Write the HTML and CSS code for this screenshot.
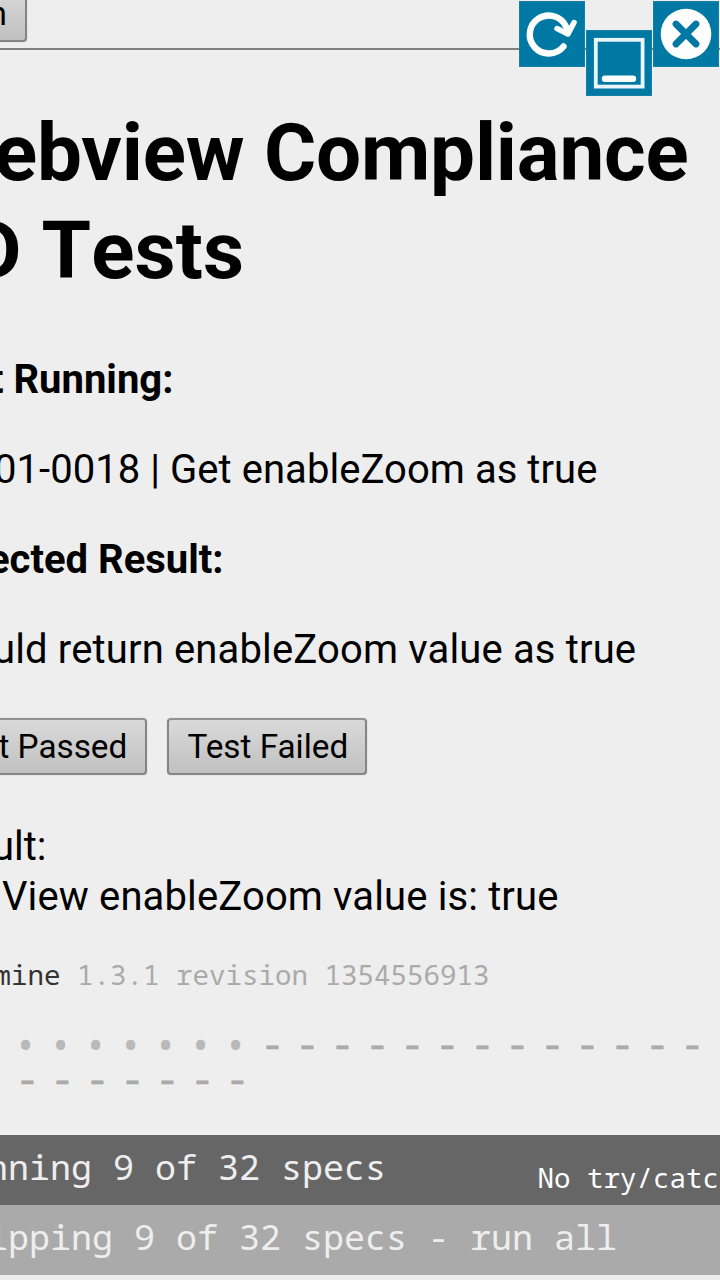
FILE: index.html
```html
<!DOCTYPE html>
<html lang="en">
<head>
<meta charset="utf-8">
<title>Webview Compliance</title>
<link rel="stylesheet" href="styles.css">
</head>
<body>
<header class="top"><button class="btn btn-top">n</button></header>
<nav class="controls">
  <svg class="control reload" viewBox="0 0 66 66"><path d="M44.500 45.500A19 19 0 1 1 47 25.500" class="stroke"/><path d="M38 27.500L49 33L55 21.500" class="arrow"/><path d="M43 24L51 26L48 34Z" fill="#fff"/></svg>
  <svg class="control minimize" viewBox="0 0 66 66"><rect x="9.800" y="9.800" width="46.800" height="46.800" class="frame"/><path d="M19 48.700H47" class="stroke"/></svg>
  <svg class="control close" viewBox="0 0 66 66"><circle cx="33" cy="33" r="25.300" fill="#fff"/><path d="M23 23L43 43M43 23L23 43" class="cross"/></svg>
</nav>
<main>
  <h1 class="title"><span class="title-a">ebview Compliance</span><span class="title-b">D Tests</span></h1>
  <p class="line bold l1">t Running:</p>
  <p class="line l2">01-0018 | Get enableZoom as true</p>
  <p class="line bold l3">ected Result:</p>
  <p class="line l4">uld return enableZoom value as true</p>
  <div class="actions"><button class="btn passed">t Passed</button><button class="btn failed">Test Failed</button></div>
  <div class="result"><p class="line l5">ult:</p><p class="line l6">View enableZoom value is: true</p></div>
</main>
<section class="reporter">
  <div class="version"><span class="name">mine</span> 1.3.1 revision 1354556913</div>
  <div class="symbols">
    <span class="dot">•</span><span class="dot">•</span><span class="dot">•</span><span class="dot">•</span><span class="dot">•</span><span class="dot">•</span><span class="dot">•</span><span>-</span><span>-</span><span>-</span><span>-</span><span>-</span><span>-</span><span>-</span><span>-</span><span>-</span><span>-</span><span>-</span><span>-</span><span>-</span>
    <span>-</span><span>-</span><span>-</span><span>-</span><span>-</span><span>-</span><span>-</span>
  </div>
  <div class="bar running"><span>nning 9 of 32 specs</span><span class="catch">No try/catc</span></div>
  <div class="bar skipping"><span>ipping 9 of 32 specs - run all</span></div>
</section>
</body>
</html>
```
FILE: styles.css
```css
* { box-sizing: border-box; }
html, body { margin: 0; height: 1280px; overflow: hidden; }
body { background: #eee; color: #000; font-family: Roboto, sans-serif; white-space: nowrap; }
p, h1 { margin: 0; }
.top { height: 50px; border-bottom: 2px solid #808080; display: flex; align-items: flex-end; padding-bottom: 6px; }
.btn { height: 57px; border: 2px solid #858585; border-top-color: #929292; border-radius: 4px; background: linear-gradient(#dadada, #c0c0c0); color: #000; font: 33.3px/53px Roboto, sans-serif; padding: 0; box-shadow: 0 0 1px #999; }
.btn-top { width: 32px; margin-left: -5px; text-align: right; padding-right: 18px; direction: rtl; }
.controls { position: absolute; top: 1px; left: 519px; display: flex; gap: 1px; }
.control { display: block; width: 66px; height: 66px; background: #0078a4; box-shadow: inset 0 0 1px 1px #1683aa; fill: none; }
.minimize { margin-top: 29px; }
.stroke { stroke: #fff; stroke-width: 6.4; stroke-linecap: round; }
.arrow { stroke: #fff; stroke-width: 5.5; stroke-linecap: round; stroke-linejoin: round; }
.frame { stroke: #eaf5fa; stroke-width: 3.8; }
.cross { stroke: #0078a4; stroke-width: 6.8; stroke-linecap: round; }
.title { padding-top: 54px; font-size: 80px; line-height: 98px; font-weight: 700; }
.title span { display: block; }
.title-a { margin-left: -6px; letter-spacing: -.2px; }
.title-b { margin-left: -30.5px; font-kerning: none; letter-spacing: .1px; }
main { height: 893px; }
.line { height: 50px; font-size: 40px; line-height: 50px; margin-bottom: 40px; }
.bold { font-weight: 700; }
.l1 { margin: 55px 0 40px -10px; }
.l2 { margin-left: -6px; letter-spacing: .05px; }
.l3 { margin-left: -12px; }
.l4 { margin-left: -7px; letter-spacing: .15px; }
.actions { display: flex; gap: 20px; margin-top: 43px; }
.passed { width: 152px; margin-left: -4.7px; text-align: right; padding-right: 18px; }
.failed { width: 200px; padding-left: 1px; }
.result { margin-top: 47px; }
.result .line { margin-bottom: 0; }
.l5 { margin-left: -8px; }
.l6 { margin-left: 2px; letter-spacing: .13px; }
.reporter { font-family: "Noto Sans Mono", "DejaVu Sans Mono", monospace; }
.version { margin: 14px 0 0 -5.5px; height: 35px; font-size: 27.5px; line-height: 35px; color: #aaa; }
.name { color: #333; }
.symbols { display: grid; grid-template-columns: repeat(20, 35px); grid-auto-rows: 35px; margin: 34px 0 0 16px; height: 109px; color: #aaa; font-size: 38px; line-height: 35px; -webkit-text-stroke: .6px #aaa; }
.dot { color: #b9b9b9; font-size: 32px; line-height: 38px; height: 35px; -webkit-text-stroke: 2px #b9b9b9; }
.bar { height: 70px; display: flex; justify-content: space-between; color: #eee; font-size: 35px; line-height: 64px; }
.running { background: #666; }
.running > :first-child { margin-left: -13px; }
.catch { color: #fff; font-size: 27.5px; line-height: 86px; margin-right: 1px; }
.skipping { background: #aaa; }
.skipping span { margin-left: -13px; }
```
